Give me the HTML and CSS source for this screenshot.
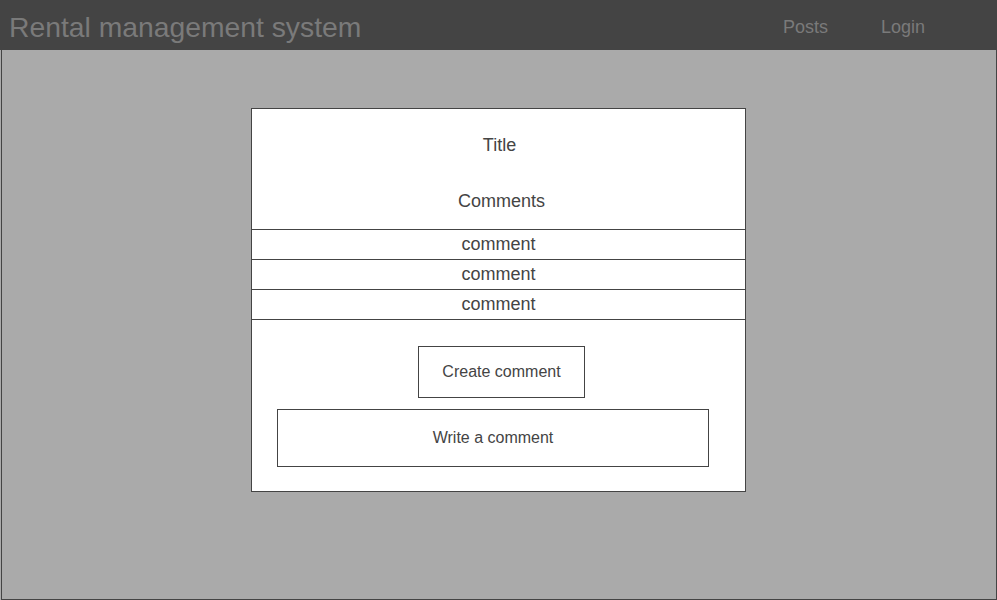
FILE: index.html
```html
<!DOCTYPE html>
<html>
<head>
<meta charset="utf-8">
<link rel="stylesheet" href="styles.css">
</head>
<body>
<header class="topbar">
  <div class="brand">Rental management system</div>
  <nav class="nav">
    <span class="nav-item">Posts</span>
    <span class="nav-item">Login</span>
  </nav>
</header>
<main class="stage">
  <section class="card">
    <div class="card-head">
      <div class="title">Title</div>
      <div class="comments-label">Comments</div>
    </div>
    <div class="comment">comment</div>
    <div class="comment">comment</div>
    <div class="comment">comment</div>
    <div class="card-foot">
      <div class="btn">Create comment</div>
      <div class="input">Write a comment</div>
    </div>
  </section>
</main>
</body>
</html>
```
FILE: styles.css
```css
* { box-sizing: border-box; }
html, body { margin: 0; padding: 0; }
body {
  font-family: "Liberation Sans", Arial, sans-serif;
  width: 997px;
  height: 600px;
  overflow: hidden;
  background: #aaaaaa;
}
.topbar {
  height: 50px;
  background: #444444;
  display: flex;
  align-items: center;
  padding-left: 9px;
}
.brand {
  font-size: 28.3px;
  color: #7a7a7a;
  line-height: 1;
  margin-top: 5px;
}
.nav {
  margin-left: auto;
  display: flex;
  gap: 53px;
  margin-right: 72px;
  margin-top: 4px;
}
.nav-item {
  font-size: 18px;
  color: #7a7a7a;
}
.stage {
  margin-left: 1px;
  height: 550px;
  background: #aaaaaa;
  border: 1px solid #444444;
  border-top: none;
  padding-top: 58px;
  padding-left: 249px;
}
.card {
  width: 495px;
  height: 384px;
  background: #ffffff;
  border: 1px solid #444444;
  color: #444444;
  display: flex;
  flex-direction: column;
}
.card-head {
  height: 121px;
  border-bottom: 1px solid #444444;
  display: flex;
  flex-direction: column;
  align-items: center;
  font-size: 18px;
}
.title {
  margin-top: 26px;
  line-height: 21px;
  margin-left: 2px;
}
.comments-label {
  margin-top: 35px;
  line-height: 21px;
  margin-left: 6px;
}
.comment {
  height: 30px;
  border-bottom: 1px solid #444444;
  font-size: 18px;
  display: flex;
  align-items: center;
  justify-content: center;
}
.card-foot {
  flex: 1;
  display: flex;
  flex-direction: column;
  padding-top: 26px;
}
.btn {
  align-self: flex-start;
  margin-left: 166px;
  width: 167px;
  height: 52px;
  border: 1px solid #444444;
  font-size: 16px;
  display: flex;
  align-items: center;
  justify-content: center;
}
.input {
  margin-top: 11px;
  margin-left: 25px;
  width: 432px;
  height: 58px;
  border: 1px solid #444444;
  font-size: 16px;
  display: flex;
  align-items: center;
  justify-content: center;
}
```
